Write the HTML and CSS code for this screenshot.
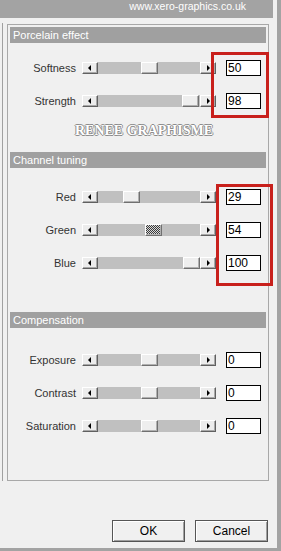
FILE: index.html
```html
<!DOCTYPE html>
<html>
<head>
  <title>Porcelain</title>
  <link rel="stylesheet" href="styles.css">
</head>
<body>

<div class="dialog">
  <div class="topbar">www.xero-graphics.co.uk</div>

  <div class="panel">
    <div class="frame">
      <div class="section-title">Porcelain effect</div>

      <div class="row first">
        <span class="label">Softness</span>
        <div class="slider">
          <span class="arrow left"></span>
          <span class="track"><span class="thumb" style="left:43px"></span></span>
          <span class="arrow right"></span>
        </div>
        <span class="value">50</span>
      </div>
      <div class="row">
        <span class="label">Strength</span>
        <div class="slider">
          <span class="arrow left"></span>
          <span class="track"><span class="thumb" style="left:84px"></span></span>
          <span class="arrow right"></span>
        </div>
        <span class="value">98</span>
      </div>

      <div class="watermark">RENEE GRAPHISME</div>

      <div class="section-title">Channel tuning</div>

      <div class="row channel-first">
        <span class="label">Red</span>
        <div class="slider">
          <span class="arrow left"></span>
          <span class="track"><span class="thumb" style="left:25px"></span></span>
          <span class="arrow right"></span>
        </div>
        <span class="value">29</span>
      </div>
      <div class="row">
        <span class="label">Green</span>
        <div class="slider">
          <span class="arrow left"></span>
          <span class="track"><span class="thumb focused" style="left:47px"></span></span>
          <span class="arrow right"></span>
        </div>
        <span class="value">54</span>
      </div>
      <div class="row">
        <span class="label">Blue</span>
        <div class="slider">
          <span class="arrow left"></span>
          <span class="track"><span class="thumb" style="left:85px"></span></span>
          <span class="arrow right"></span>
        </div>
        <span class="value">100</span>
      </div>

      <div class="section-title compensation">Compensation</div>

      <div class="row comp-first">
        <span class="label">Exposure</span>
        <div class="slider">
          <span class="arrow left"></span>
          <span class="track"><span class="thumb" style="left:43px"></span></span>
          <span class="arrow right"></span>
        </div>
        <span class="value">0</span>
      </div>
      <div class="row">
        <span class="label">Contrast</span>
        <div class="slider">
          <span class="arrow left"></span>
          <span class="track"><span class="thumb" style="left:43px"></span></span>
          <span class="arrow right"></span>
        </div>
        <span class="value">0</span>
      </div>
      <div class="row">
        <span class="label">Saturation</span>
        <div class="slider">
          <span class="arrow left"></span>
          <span class="track"><span class="thumb" style="left:43px"></span></span>
          <span class="arrow right"></span>
        </div>
        <span class="value">0</span>
      </div>
    </div>
  </div>

  <div class="actions">
    <button class="btn">OK</button>
    <button class="btn">Cancel</button>
  </div>

  <div class="mark mark-top"></div>
  <div class="mark mark-channels"></div>
</div>

</body>
</html>
```

FILE: styles.css
```css
body {
  margin: 0;
  background-color: #f0f0f0;
  font-family: 'Liberation Sans', Arial, sans-serif;
}
.dialog {
  position: relative;
  width: 277px;
  height: 548px;
  border-right: 4px solid #a3a3a3;
  border-bottom: 3px solid #a3a3a3;
  background-color: #f0f0f0;
}
.topbar {
  height: 18px;
  margin-right: 4px;
  padding-right: 27px;
  background-color: #a3a3a3;
  color: #fff;
  font-size: 10.5px;
  line-height: 13px;
  text-align: right;
}
.panel {
  margin: 5px 0 0 2px;
  padding: 1px 0 0 4px;
  border-left: 1px solid #a0a0a0;
}
.frame {
  box-sizing: border-box;
  width: 262px;
  height: 457px;
  padding: 2px;
  border: 1px solid #a8a8a8;
}
.section-title {
  height: 16px;
  padding-left: 3px;
  background-color: #a0a0a0;
  color: #fff;
  font-size: 11px;
  line-height: 16px;
}
.section-title.compensation {
  margin-top: 41px;
}
.row {
  display: flex;
  align-items: center;
  height: 16px;
  margin-top: 17px;
}
.row.first {
  margin-top: 17px;
}
.row.channel-first {
  margin-top: 21px;
}
.row.comp-first {
  margin-top: 24px;
}
.label {
  width: 66px;
  margin-right: 6px;
  text-align: right;
  color: #333;
  font-size: 11px;
}
.slider {
  display: flex;
  width: 134px;
  height: 12px;
}
.arrow {
  position: relative;
  box-sizing: border-box;
  width: 16px;
  height: 12px;
  background-color: #ececec;
  border-top: 1px solid #fff;
  border-left: 1px solid #fff;
  border-right: 1px solid #606060;
  border-bottom: 1px solid #606060;
  box-shadow: inset -1px -1px #a8a8a8;
}
.arrow::before {
  content: "";
  position: absolute;
  top: 2px;
  left: 5px;
  border-top: 3px solid transparent;
  border-bottom: 3px solid transparent;
}
.arrow.left::before {
  border-right: 3px solid #000;
}
.arrow.right::before {
  left: 6px;
  border-left: 3px solid #000;
}
.track {
  position: relative;
  flex: 1;
  background-color: #c0c0c0;
}
.thumb {
  position: absolute;
  top: 0;
  box-sizing: border-box;
  width: 17px;
  height: 12px;
  background-color: #eeeeee;
  border-top: 1px solid #fff;
  border-left: 1px solid #fff;
  border-right: 1px solid #707070;
  border-bottom: 1px solid #707070;
  box-shadow: inset -1px -1px #b0b0b0;
}
.thumb.focused {
  background: repeating-conic-gradient(#3a3a3a 0 25%, #d8d8d8 0 50%) 0 0 / 2px 2px;
}
.value {
  box-sizing: border-box;
  width: 35px;
  height: 16px;
  margin-left: 10px;
  padding-left: 1px;
  border: 1px solid #000;
  background-color: #fff;
  color: #000;
  font-size: 12px;
  line-height: 14px;
}
.watermark {
  height: 16px;
  margin: 14px 0 13px;
  padding-left: 12px;
  text-align: center;
  font-family: 'Liberation Serif', 'Times New Roman', serif;
  font-weight: bold;
  font-size: 14px;
  line-height: 16px;
  color: #fff;
  text-shadow: 1px 0 #8c8c8c, -1px 0 #8c8c8c, 0 1px #8c8c8c, 0 -1px #8c8c8c;
}
.actions {
  display: flex;
  justify-content: flex-end;
  gap: 10px;
  margin-top: 39px;
  padding-right: 9px;
}
.btn {
  box-sizing: border-box;
  width: 73px;
  height: 22px;
  padding: 0;
  border: 1px solid #555;
  background-color: #f0f0f0;
  box-shadow: inset 1px 1px #fff, inset -1px -1px #a0a0a0;
  color: #000;
  font-family: 'Liberation Sans', Arial, sans-serif;
  font-size: 12px;
}
.mark {
  position: absolute;
  box-sizing: border-box;
  border: 3px solid #c8201c;
}
.mark-top {
  left: 211px;
  top: 52px;
  width: 58px;
  height: 66px;
}
.mark-channels {
  left: 216px;
  top: 184px;
  width: 57px;
  height: 102px;
}
```
